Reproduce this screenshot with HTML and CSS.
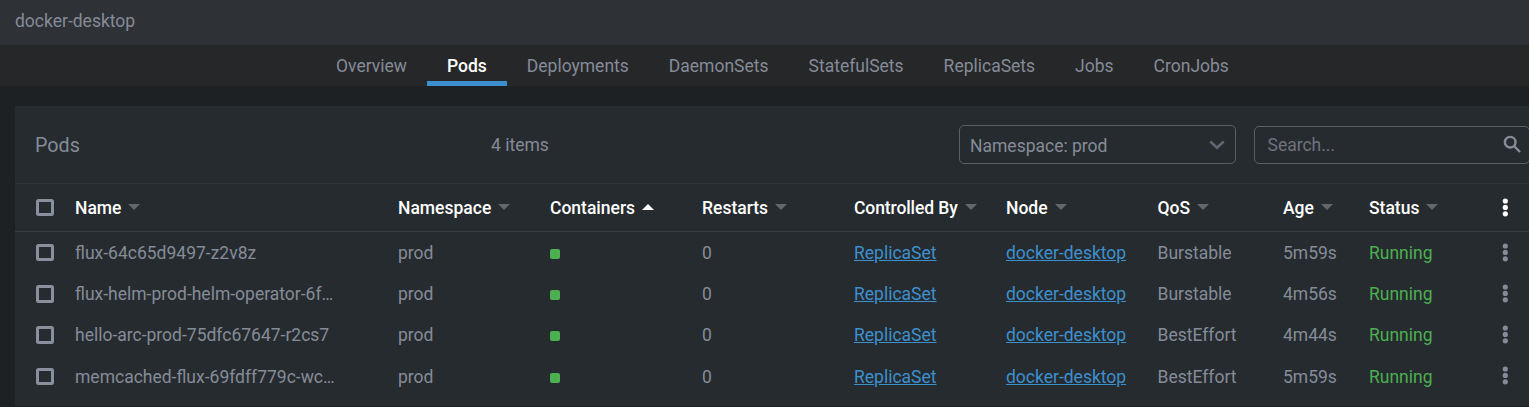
FILE: index.html
```
<!DOCTYPE html>
<html lang="en">
<head>
<meta charset="utf-8">
<title>Pods</title>
<link rel="stylesheet" href="styles.css">
</head>
<body>
<svg width="0" height="0" class="defs" aria-hidden="true">
  <symbol id="dots" viewBox="0 0 6 20"><circle cx="3.3" cy="3" r="2.6"/><circle cx="3.3" cy="9.4" r="2.6"/><circle cx="3.3" cy="15.8" r="2.6"/></symbol>
</svg>
<header class="cluster">docker-desktop</header>
<nav class="tabs">
  <a class="tab">Overview</a><a class="tab active">Pods</a><a class="tab">Deployments</a><a class="tab">DaemonSets</a><a class="tab">StatefulSets</a><a class="tab">ReplicaSets</a><a class="tab">Jobs</a><a class="tab">CronJobs</a>
</nav>
<main class="panel">
  <div class="toolbar">
    <h1 class="title">Pods</h1>
    <span class="count">4 items</span>
    <div class="select"><span>Namespace: prod</span>
      <svg class="chevron" width="16" height="10" viewBox="0 0 16 10"><path d="M1.3 1.5l6.7 6.3 6.7-6.3"/></svg></div>
    <div class="search"><span>Search...</span>
      <svg class="glass" width="19" height="19" viewBox="0 0 19 19"><circle cx="7.2" cy="7.2" r="5.3"/><path d="M11 11l6 6"/></svg></div>
  </div>
  <div class="row head">
    <i class="box"></i>
    <span class="sort">Name</span><span class="sort">Namespace</span><span class="sort up">Containers</span><span class="sort">Restarts</span><span class="sort tight">Controlled By</span><span class="sort">Node</span><span class="sort">QoS</span><span class="sort">Age</span><span class="sort">Status</span>
    <svg class="menu"><use href="#dots"/></svg>
  </div>
  <div class="row">
    <i class="box"></i><span class="name">flux-64c65d9497-z2v8z</span><span>prod</span><i class="brick"></i><span>0</span><span><a class="link">ReplicaSet</a></span><span><a class="link">docker-desktop</a></span><span>Burstable</span><span>5m59s</span><span class="ok">Running</span><svg class="menu"><use href="#dots"/></svg>
  </div>
  <div class="row">
    <i class="box"></i><span class="name">flux-helm-prod-helm-operator-6f…</span><span>prod</span><i class="brick"></i><span>0</span><span><a class="link">ReplicaSet</a></span><span><a class="link">docker-desktop</a></span><span>Burstable</span><span>4m56s</span><span class="ok">Running</span><svg class="menu"><use href="#dots"/></svg>
  </div>
  <div class="row">
    <i class="box"></i><span class="name">hello-arc-prod-75dfc67647-r2cs7</span><span>prod</span><i class="brick"></i><span>0</span><span><a class="link">ReplicaSet</a></span><span><a class="link">docker-desktop</a></span><span>BestEffort</span><span>4m44s</span><span class="ok">Running</span><svg class="menu"><use href="#dots"/></svg>
  </div>
  <div class="row">
    <i class="box"></i><span class="name">memcached-flux-69fdff779c-wc…</span><span>prod</span><i class="brick"></i><span>0</span><span><a class="link">ReplicaSet</a></span><span><a class="link">docker-desktop</a></span><span>BestEffort</span><span>5m59s</span><span class="ok">Running</span><svg class="menu"><use href="#dots"/></svg>
  </div>
</main>
</body>
</html>
```
FILE: styles.css
```
* { box-sizing: border-box; }
body {
  margin: 0;
  height: 407px;
  overflow: hidden;
  background: #1e2124;
  color: #858b98;
  font: 17.5px/21px Roboto, sans-serif;
  white-space: nowrap;
}
.defs { display: block; height: 0; }
.cluster { height: 45px; padding: 11px 15px; background: #2e3136; }
.tabs {
  display: flex;
  height: 41px;
  padding-left: 316px;
  background: #262729;
}
.tab { padding: 11px 20px 0; }
.active { color: #fff; font-weight: 500; border-bottom: 5px solid #3d90ce; }
.panel { height: 300px; margin: 20px 0 0 15px; background: #262b2f; }
.toolbar {
  display: grid;
  grid-template-columns: 456px 468px 295px 276px;
  height: 78px;
  padding: 19px 0 0 20px;
  border-bottom: 1px solid #303439;
}
.title { margin: 10px 0 0; font-size: 19.7px; font-weight: 400; line-height: 21px; }
.count { margin-top: 10px; }
.select, .search {
  display: flex;
  align-items: center;
  justify-content: space-between;
  height: 39px;
  border: 1px solid #5c6065;
  border-radius: 5px;
}
.select { width: 277px; padding: 3px 10px 0; }
.search { height: 38px; margin-top: 1px; padding: 0 7px 0 12.5px; color: #6e737e; }
.chevron { fill: none; stroke: #606772; stroke-width: 2.6; }
.select .chevron { margin-top: -2px; }
.glass { margin-top: -1px; fill: none; stroke: #858b98; stroke-width: 2.4; }
.row {
  display: grid;
  grid-template-columns: 39px 323px 152px 152px 152px 152px 151.5px 125.5px 86px 132.5px 20px;
  align-items: center;
  height: 41.25px;
  padding-left: 21px;
}
.row > span { padding-top: 1.5px; }
.head { height: 48px; border-bottom: 1px solid #383d42; color: #fff; font-weight: 500; }
.box { width: 18px; height: 17.5px; border: 3px solid #87909c; border-radius: 2.5px; }
.head .box { height: 17px; }
.tight { letter-spacing: -0.1px; }
.sort::after {
  content: "";
  display: inline-block;
  margin-left: 7px;
  vertical-align: 4px;
  border: 6px solid transparent;
  border-top-color: #63666a;
  border-bottom: 0;
}
.up::after { border-top: 0; border-bottom: 6px solid #fff; }
.brick { width: 10px; height: 10px; margin-top: 2.6px; border-radius: 2px; background: #4caf50; }
.link { color: #3d90ce; text-decoration: underline; }
.ok { color: #4caf50; }
.menu { width: 6px; height: 20px; fill: #858b98; }
.head .menu { fill: #fff; }
```
